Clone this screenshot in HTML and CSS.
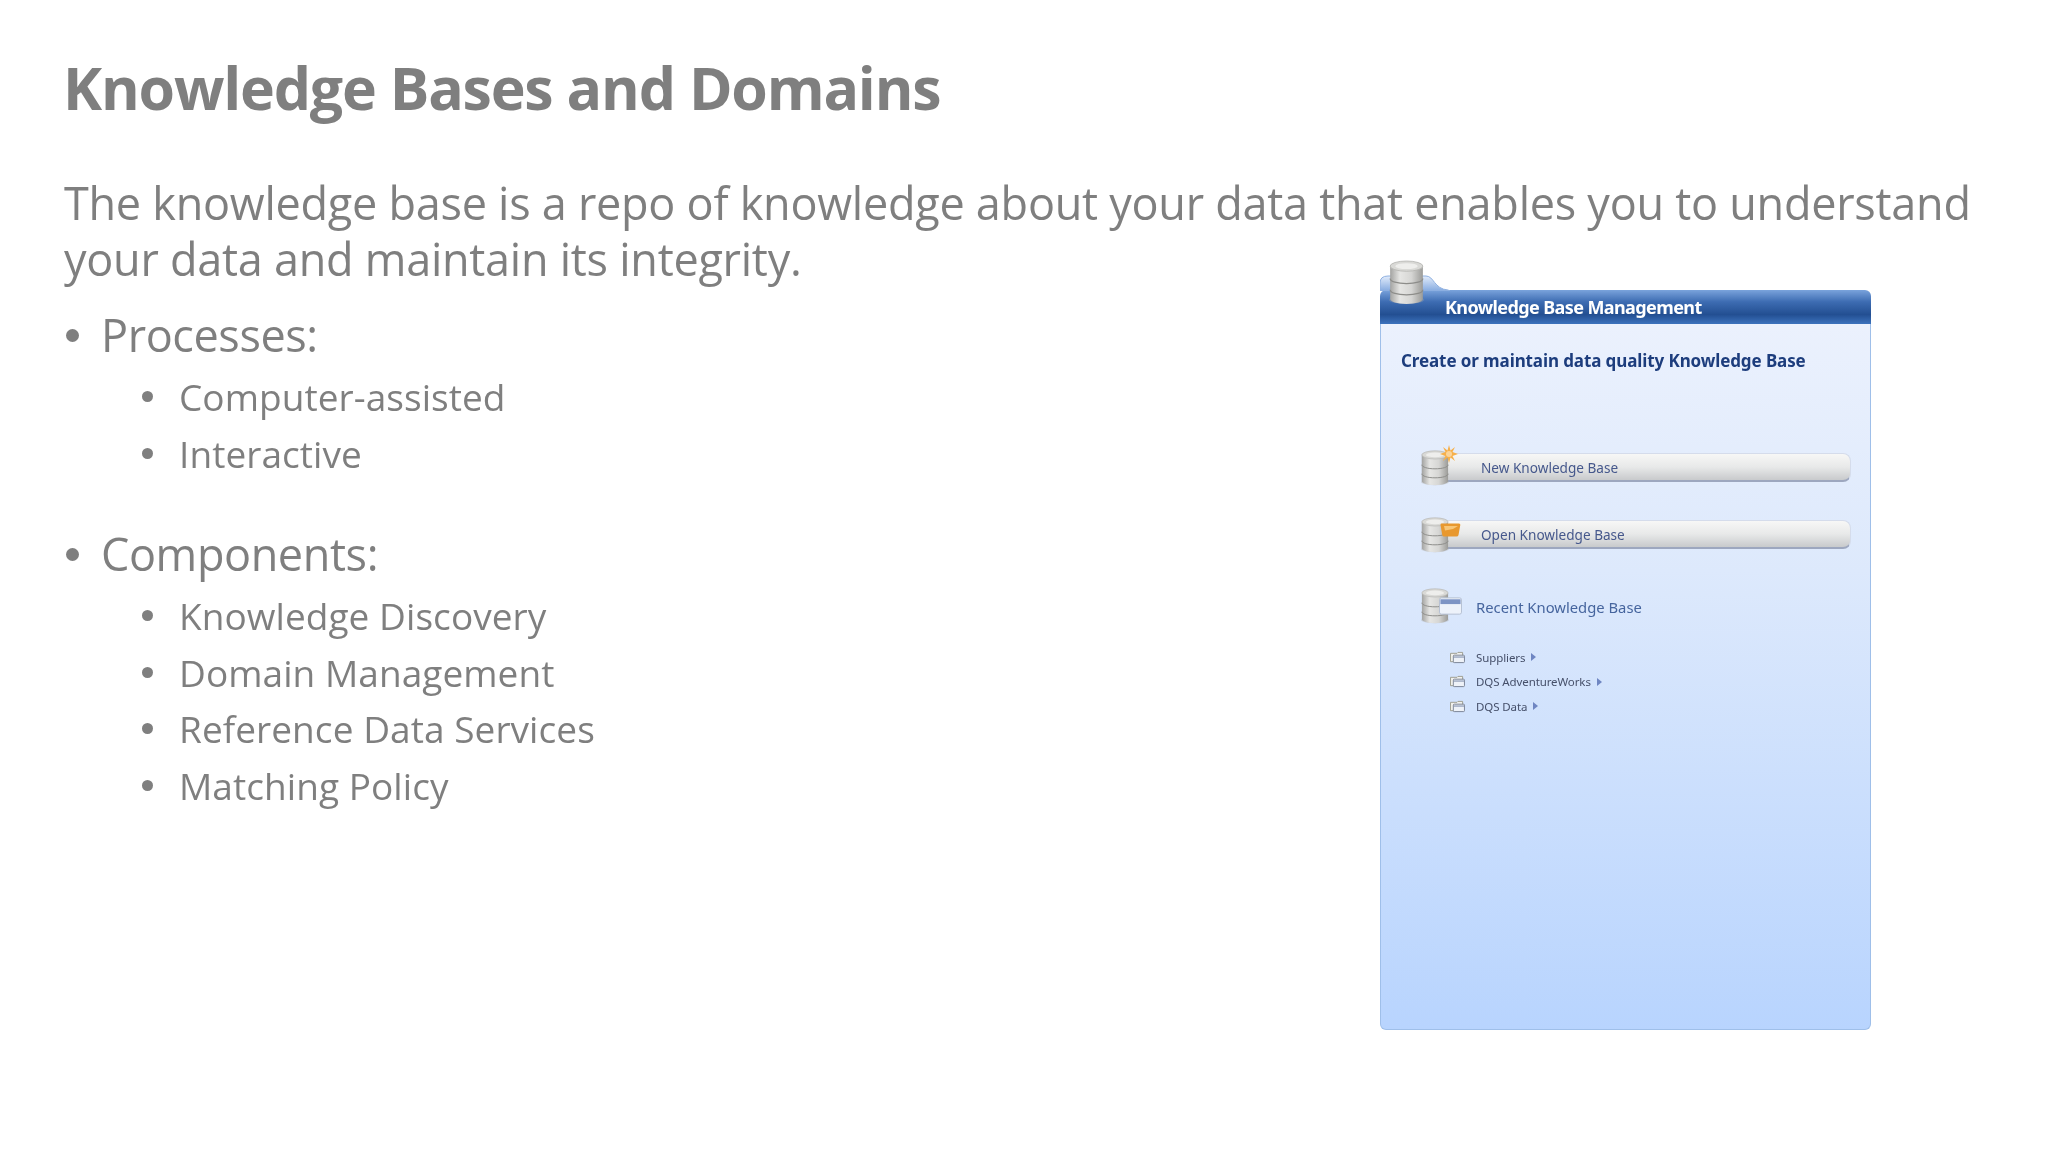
FILE: index.html
```html
<!DOCTYPE html>
<html lang="en">
<head>
<meta charset="utf-8">
<title>Knowledge Bases and Domains</title>
<link rel="stylesheet" href="styles.css">
</head>
<body>
<svg class="defs" width="0" height="0" aria-hidden="true">
  <defs>
    <linearGradient id="metal" x1="0" x2="1" y1="0" y2="0">
      <stop offset="0" stop-color="#a3a3a1"/><stop offset=".3" stop-color="#e6e6e4"/><stop offset=".65" stop-color="#d6d6d4"/><stop offset="1" stop-color="#9b9b98"/>
    </linearGradient>
    <symbol id="db" viewBox="0 0 34 44">
      <ellipse cx="17" cy="39" rx="17" ry="4" fill="#aaa" opacity=".35"/>
      <path d="M1 6v32c0 3 7 5 16 5s16-2 16-5V6z" fill="url(#metal)"/>
      <ellipse cx="17" cy="6" rx="16" ry="5" fill="#d9d9d6" stroke="#b4b4b0" stroke-width=".8"/>
      <ellipse cx="17" cy="6" rx="11" ry="2.8" fill="#eeeeec"/>
      <path d="M1 18c0 3 7 5 16 5s16-2 16-5M1 29c0 3 7 5 16 5s16-2 16-5" fill="none" stroke="#8d8d8a" stroke-width="1.200"/>
    </symbol>
    <symbol id="recent-doc" viewBox="0 0 18 14">
      <path d="M1.500 2.500h7l1-1h5v10h-13z" fill="#f2f2ee" stroke="#9a9a8c"/>
      <rect x="4.500" y="4.500" width="12" height="8" rx="1" fill="#eef2f8" stroke="#767f92"/>
      <path d="M5 6.500h11" stroke="#6f7fa2"/>
    </symbol>
  </defs>
</svg>
<main class="slide">
  <h1 class="title">Knowledge Bases and Domains</h1>
  <p class="intro">The knowledge base is a repo of knowledge about your data that enables you to understand your data and maintain its integrity.</p>
  <div class="content">
    <div class="outline">
      <h2 class="topic">Processes:</h2>
      <ul class="subtopics">
        <li>Computer-assisted</li>
        <li>Interactive</li>
      </ul>
      <h2 class="topic topic-next">Components:</h2>
      <ul class="subtopics">
        <li>Knowledge Discovery</li>
        <li>Domain Management</li>
        <li>Reference Data Services</li>
        <li>Matching Policy</li>
      </ul>
    </div>
    <section class="panel">
      <svg class="tab" viewBox="0 0 70 16" width="70" height="16" aria-hidden="true">
        <defs><linearGradient id="tabfill" x1="0" x2="0" y1="0" y2="1"><stop offset="0" stop-color="#e2ecfb"/><stop offset="1" stop-color="#86abe0"/></linearGradient></defs>
        <path d="M0 16V8Q0 1 8 1H46C54 1 54 14 68 15L70 16Z" fill="url(#tabfill)" stroke="#8fb0e0"/>
      </svg>
      <svg class="panel-db" aria-hidden="true"><use href="#db"/></svg>
      <header class="panel-head">Knowledge Base Management</header>
      <div class="panel-body">
        <h3 class="panel-title">Create or maintain data quality Knowledge Base</h3>
        <div class="actions">
          <div class="action">
            <svg class="action-db" aria-hidden="true"><use href="#db"/></svg>
            <svg class="badge" viewBox="0 0 18 18" aria-hidden="true">
              <path d="M9 0l1.500 5.500L15 2l-2.500 5L18 9l-5.500 2 2.500 5-4.500-3.500L9 18l-1.500-5.500L3 16l2.500-5L0 9l5.500-2L3 2l4.500 3.500z" fill="#f7b04a"/>
              <circle cx="9" cy="9" r="3" fill="#fbd49a"/>
            </svg>
            New Knowledge Base
          </div>
          <div class="action">
            <svg class="action-db" aria-hidden="true"><use href="#db"/></svg>
            <svg class="badge badge-folder" viewBox="0 0 21 15" aria-hidden="true">
              <path d="M1.500 1.500H19q1.500 0 1.300 1.500L18.500 13q-.3 1.500-2 1.500H4q-1.500 0-1.700-1.500L.5 3q-.2-1.500 1-1.500z" fill="#e8982e"/>
              <path d="M4 4h14l-5 3-8 1.500z" fill="#f8c676"/>
            </svg>
            Open Knowledge Base
          </div>
        </div>
        <div class="recent">
          <svg class="recent-db" aria-hidden="true"><use href="#db"/></svg>
          <svg class="badge badge-window" viewBox="0 0 24 18" aria-hidden="true">
            <rect x=".5" y=".5" width="23" height="17" rx="2" fill="#edf2fa" stroke="#b4bfd2"/>
            <rect x="1.500" y="2" width="21" height="5" fill="#7d94c4"/>
          </svg>
          Recent Knowledge Base
        </div>
        <ul class="recent-list">
          <li><svg class="doc" aria-hidden="true"><use href="#recent-doc"/></svg>Suppliers<span class="arrow"></span></li>
          <li><svg class="doc" aria-hidden="true"><use href="#recent-doc"/></svg>DQS AdventureWorks<span class="arrow"></span></li>
          <li><svg class="doc" aria-hidden="true"><use href="#recent-doc"/></svg>DQS Data<span class="arrow"></span></li>
        </ul>
      </div>
    </section>
  </div>
</main>
</body>
</html>
```
FILE: styles.css
```css
* { box-sizing: border-box; }
html, body { margin: 0; padding: 0; background: #fff; }
body { width: 2048px; height: 1152px; overflow: hidden; font-family: "Open Sans", "Noto Sans", sans-serif; color: #7f7f7f; }
.defs { display: block; height: 0; }
.slide { padding: 49px 0 0 64px; filter: blur(.35px); }
.title { margin: 0 0 0 -1px; font-size: 59px; line-height: 76px; font-weight: 700; letter-spacing: -1.200px; }
.intro { width: 1930px; margin: 50px 0 0; font-size: 45px; line-height: 56px; font-weight: 400; letter-spacing: -.26px; }
.content { display: flex; justify-content: space-between; width: 1807px; }
.outline { padding-top: 15px; }
.topic { margin: 0; display: flex; align-items: center; font-size: 45px; line-height: 66px; font-weight: 400; letter-spacing: -.4px; }
.topic::before { content: ""; width: 13px; height: 13px; margin: 0 22px 0 2px; border-radius: 50%; background: #7f7f7f; }
.topic-next { margin-top: 39.700px; }
.subtopics { margin: 0; padding: 0 0 0 78px; list-style: none; }
.subtopics li { display: flex; align-items: center; height: 56.700px; font-size: 37px; letter-spacing: .06px; }
.subtopics li::before { content: ""; width: 11px; height: 11px; margin-right: 26px; border-radius: 50%; background: #7f7f7f; }
.panel { position: relative; flex: none; width: 491px; height: 740px; margin-top: 3px; font-family: "Noto Sans", sans-serif; filter: blur(.25px); }
.tab { position: absolute; top: -15px; left: 0; }
.panel-db { position: absolute; top: -30px; left: 9px; width: 35px; height: 45px; }
.panel-head { height: 34px; padding-left: 65px; border-radius: 6px 6px 0 0; background: linear-gradient(#7aa3dc 0%, #3d6cb2 35%, #234f92 72%, #3c72bd 100%); color: #fff; font-size: 18px; font-weight: 700; line-height: 35px; letter-spacing: -.6px; white-space: nowrap; }
.panel-body { height: 706px; padding: 25px 19px 0 20px; border: 1px solid #9fbfe9; border-top: 0; border-radius: 0 0 6px 6px; background: linear-gradient(#ebf1fd 0%, #dde9fc 35%, #b8d4fe 100%); }
.panel-title { margin: 0; color: #1d3d7d; font-size: 17px; line-height: 24px; font-weight: 700; letter-spacing: -.1px; white-space: nowrap; }
.actions { display: flex; flex-direction: column; gap: 38px; margin: 80px 0 0 20px; }
.action { position: relative; height: 29px; padding-left: 59px; border: 1px solid #d5dceb; border-bottom: 2px solid #9da7bf; border-radius: 3px 8px 8px 3px; background: linear-gradient(#f7f7f6, #e8e9e9 50%, #c8cacc); color: #46588c; font-size: 13.600px; line-height: 27px; white-space: nowrap; }
.action-db { position: absolute; left: -1px; top: -4px; width: 28px; height: 36px; }
.badge { position: absolute; left: 18px; top: -9px; width: 18px; height: 18px; }
.badge-folder { left: 18px; top: 1px; width: 21px; height: 15px; }
.recent { position: relative; height: 36px; margin: 39px 0 0 35px; padding-left: 40px; color: #46659e; font-size: 14.800px; line-height: 38px; white-space: nowrap; }
.recent-db { position: absolute; left: -15px; top: 0; width: 28px; height: 36px; }
.badge-window { left: 3px; top: 9px; width: 23px; height: 18px; }
.recent-list { margin: 21px 0 0 48px; padding: 0; list-style: none; }
.recent-list li { display: flex; align-items: center; height: 24.500px; color: #46506a; font-size: 11.500px; letter-spacing: -.1px; white-space: nowrap; }
.doc { width: 17px; height: 13px; margin-right: 10px; }
.arrow { width: 0; height: 0; margin-left: 6px; border-left: 5px solid #6f86c2; border-top: 4px solid transparent; border-bottom: 4px solid transparent; }
```
